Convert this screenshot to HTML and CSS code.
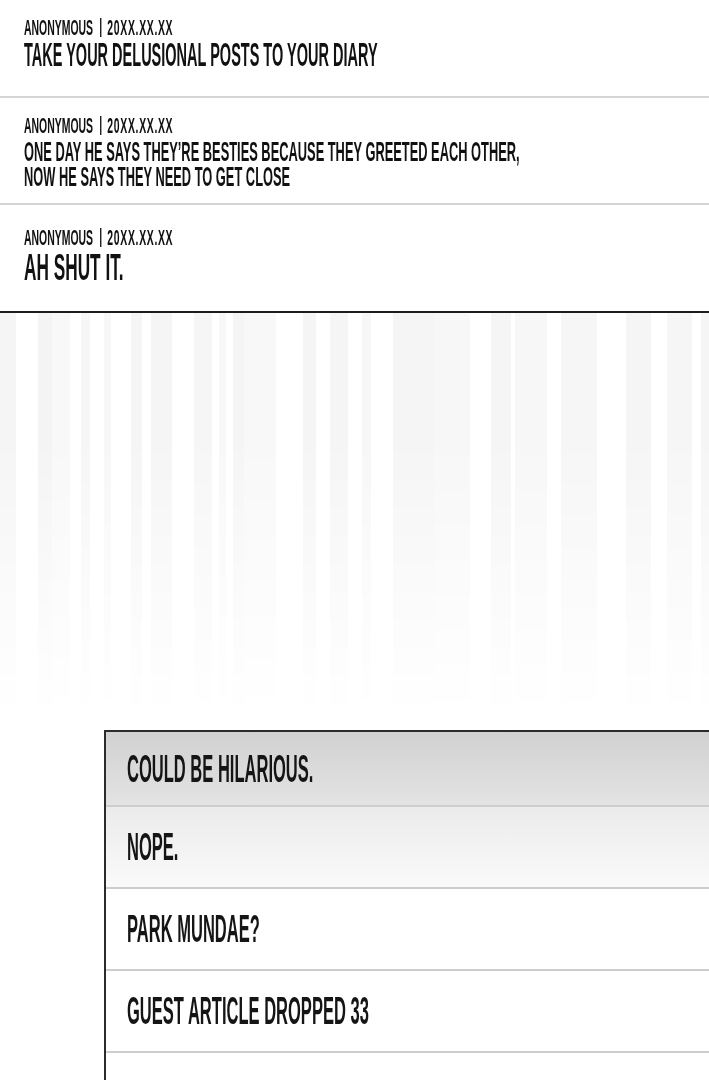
FILE: index.html
```html
<!DOCTYPE html>
<html lang="en">
<head>
    <meta charset="UTF-8">
    <meta name="viewport" content="width=device-width, initial-scale=1.0">
    <title>Board thread</title>
    <link rel="stylesheet" href="styles.css">
</head>
<body>

<div class="thread">
    <div class="post post--first">
        <div class="meta"><span>ANONYMOUS</span><span class="pipe"></span><span class="date">20XX.XX.XX</span></div>
        <div class="post-text post-text--lg">TAKE YOUR DELUSIONAL POSTS TO YOUR DIARY</div>
    </div>

    <div class="post post--second">
        <div class="meta"><span>ANONYMOUS</span><span class="pipe"></span><span class="date">20XX.XX.XX</span></div>
        <div class="post-text post-text--sm">ONE DAY HE SAYS THEY’RE BESTIES BECAUSE THEY GREETED EACH OTHER,<br>NOW HE SAYS THEY NEED TO GET CLOSE</div>
    </div>

    <div class="post post--last">
        <div class="meta"><span>ANONYMOUS</span><span class="pipe"></span><span class="date">20XX.XX.XX</span></div>
        <div class="post-text post-text--xl">AH SHUT IT.</div>
    </div>
</div>

<!-- faded speed lines between the thread and the search box -->
<div class="streaks"></div>

<ul class="suggestions">
    <li class="suggestion suggestion--top"><span class="suggestion-text">COULD BE HILARIOUS.</span></li>
    <li class="suggestion suggestion--fade"><span class="suggestion-text">NOPE.</span></li>
    <li class="suggestion"><span class="suggestion-text">PARK MUNDAE?</span></li>
    <li class="suggestion"><span class="suggestion-text">GUEST ARTICLE DROPPED 33</span></li>
    <li class="suggestion suggestion--more"></li>
</ul>

</body>
</html>
```

FILE: styles.css
```css
html, body {
    margin: 0;
    padding: 0;
    background-color: #fff;
    overflow: hidden;
}

body {
    font-family: "Liberation Sans", Arial, sans-serif;
    font-weight: 700;
    color: #111;
}

/* thread */

.post {
    padding: 17px 24px 25px;
    border-bottom: 2px solid #d4d4d4;
}

.post--second {
    padding-bottom: 14px;
}

.post--last {
    padding-top: 22px;
    padding-bottom: 26px;
    border-bottom: 2px solid #1c1c1c;
}

.meta,
.post-text,
.suggestion-text {
    white-space: nowrap;
    transform-origin: left center;
}

.meta {
    font-size: 22px;
    line-height: 22px;
    transform: scaleX(0.475);
}

.pipe {
    display: inline-block;
    width: 3px;
    height: 19px;
    margin: 0 12px 0 15px;
    background-color: #222;
    vertical-align: -2px;
}

.date {
    letter-spacing: 1.4px;
}

.post-text--lg {
    font-size: 33.5px;
    line-height: 32px;
    transform: scaleX(0.433);
}

.post-text--sm {
    margin-top: 3px;
    font-size: 28px;
    line-height: 24.5px;
    transform: scaleX(0.459);
}

.post-text--xl {
    margin-top: 2px;
    font-size: 36.3px;
    line-height: 34px;
    transform: scaleX(0.475);
}

/* speed lines */

.streaks {
    height: 417px;
    background-image: linear-gradient(90deg,
        #f5f5f5 0 16px, #fff 16px 38px,
        #f4f4f4 38px 52px, #f8f8f8 52px 70px, #fff 70px 81px,
        #f6f6f6 81px 90px, #fff 90px 104px,
        #f7f7f7 104px 111px, #fff 111px 131px,
        #f5f5f5 131px 142px, #fff 142px 151px,
        #f5f5f5 151px 172px, #fff 172px 194px,
        #f6f6f6 194px 212px, #fff 212px 219px,
        #f8f8f8 219px 226px, #fff 226px 233px,
        #f5f5f5 233px 244px, #f8f8f8 244px 276px, #fff 276px 303px,
        #f5f5f5 303px 316px, #fff 316px 330px,
        #f5f5f5 330px 348px, #fff 348px 362px,
        #f7f7f7 362px 371px, #fff 371px 393px,
        #f5f5f5 393px 434px, #f7f7f7 434px 470px, #fff 470px 491px,
        #f5f5f5 491px 511px, #fff 511px 515px,
        #f7f7f7 515px 547px, #fff 547px 561px,
        #f6f6f6 561px 597px, #fff 597px 626px,
        #f5f5f5 626px 651px, #fff 651px 667px,
        #f6f6f6 667px 692px, #fff 692px 701px,
        #f5f5f5 701px 709px);
    -webkit-mask-image: linear-gradient(to bottom, #000 0%, #000 30%, transparent 97%);
    mask-image: linear-gradient(to bottom, #000 0%, #000 30%, transparent 97%);
}

/* search suggestions */

.suggestions {
    list-style: none;
    margin: 0 0 0 104px;
    padding: 0;
    border-top: 2px solid #2b2b2b;
    border-left: 2px solid #2b2b2b;
}

.suggestion {
    display: flex;
    align-items: center;
    height: 80px;
    padding-left: 21px;
    border-bottom: 2px solid #cdcdcd;
    background-color: #fff;
}

.suggestion--top {
    height: 73px;
    background: linear-gradient(to bottom, #d1d1d1, #e3e3e3);
}

.suggestion--fade {
    background: linear-gradient(to bottom, #ebebeb, #fafafa);
}

/* next row, cut off by the bottom of the screen */
.suggestion--more {
    height: 27px;
    border-bottom: none;
}

.suggestion-text {
    display: block;
    font-size: 38px;
    line-height: 40px;
    color: #151515;
    transform: scaleX(0.435);
}
```
